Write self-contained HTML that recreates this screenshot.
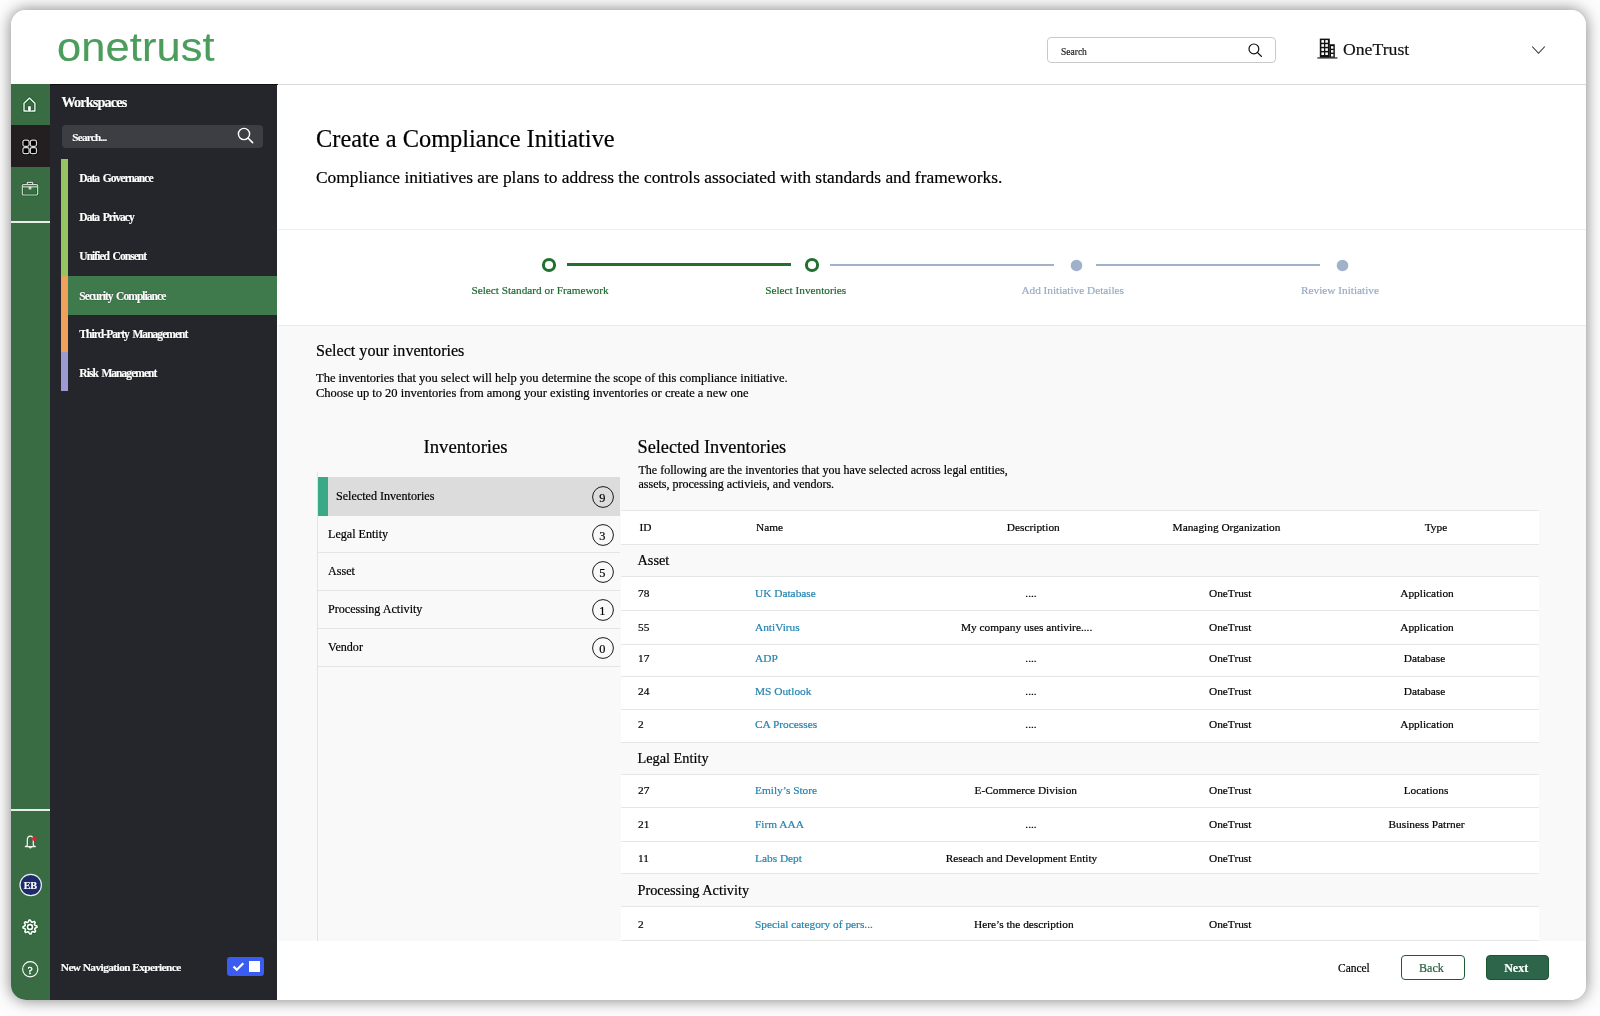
<!DOCTYPE html>
<html><head><meta charset="utf-8">
<style>
*{margin:0;padding:0;box-sizing:border-box;}
html,body{width:1600px;height:1016px;overflow:hidden;background:#fdfdfd;font-family:"Liberation Serif",serif;color:#111;}
.abs{position:absolute;}
svg.abs{overflow:visible;}
.t{position:absolute;white-space:nowrap;line-height:1;-webkit-text-stroke-width:0.2px;}
#card{will-change:transform;position:absolute;left:11px;top:10px;width:1575px;height:990px;border-radius:15px;background:#fff;overflow:hidden;box-shadow:0 0 16px rgba(0,0,0,0.5);}
#hdr{position:absolute;left:0;top:0;width:1575px;height:74.6px;background:#fff;border-bottom:1px solid #d9d9d9;}
#rail{position:absolute;left:0;top:73.5px;width:38.5px;height:917px;background:#3a6c44;}
#side{position:absolute;left:38.5px;top:73.5px;width:228.7px;height:917px;background:#25262b;border-top:1px solid #111;border-right:1px solid #111;}
#main{position:absolute;left:266px;top:74.6px;width:1309px;height:916px;background:#fff;}
</style></head><body>
<div id="card">
  <div id="hdr"></div>
  <div id="rail"></div>
  <div id="side"></div>
  <div id="main"></div>
<div class="t" style="left:45.80px;top:17.44px;font-size:40px;color:#4a9d5b;font-family:'Liberation Sans',sans-serif;letter-spacing:0.1px;transform:scaleX(1.085);transform-origin:0 0;-webkit-text-stroke:0.15px #4a9d5b;">onetrust</div>
<div class="abs" style="left:1036.00px;top:27.00px;width:229.00px;height:25.50px;border:1px solid #c9c9c9;border-radius:4px;background:#fff;"></div>
<div class="t" style="left:1050.00px;top:38.04px;font-size:9.5px;color:#222;">Search</div>
<svg class="abs" style="left:1237.00px;top:33.00px;" width="15.00" height="14.50" viewBox="0 0 15 14.5"><circle cx="5.9" cy="5.9" r="4.9" fill="none" stroke="#111" stroke-width="1.2"/><line x1="9.4" y1="9.4" x2="13.4" y2="13.4" stroke="#111" stroke-width="1.3" stroke-linecap="round"/></svg>
<svg class="abs" style="left:1306.00px;top:27.50px;" width="21.00" height="21.50" viewBox="0 0 21 21.5"><rect x="2.8" y="0.6" width="10" height="19" fill="#111"/><rect x="12.8" y="6.2" width="5" height="13.4" fill="#111"/><rect x="0.3" y="19.4" width="20.2" height="1.1" fill="#111"/><rect x="4.4" y="2.1" width="2.6" height="2.6" fill="#fff"/><rect x="8.3" y="2.1" width="2.6" height="2.6" fill="#fff"/><rect x="4.4" y="6.199999999999999" width="2.6" height="2.6" fill="#fff"/><rect x="8.3" y="6.199999999999999" width="2.6" height="2.6" fill="#fff"/><rect x="4.4" y="10.299999999999999" width="2.6" height="2.6" fill="#fff"/><rect x="8.3" y="10.299999999999999" width="2.6" height="2.6" fill="#fff"/><rect x="4.4" y="14.399999999999999" width="2.6" height="2.6" fill="#fff"/><rect x="8.3" y="14.399999999999999" width="2.6" height="2.6" fill="#fff"/><rect x="14" y="8.2" width="2.4" height="2.5" fill="#fff"/><rect x="14" y="12.1" width="2.4" height="2.5" fill="#fff"/><rect x="14" y="16.0" width="2.4" height="2.5" fill="#fff"/></svg>
<div class="t" style="left:1332.00px;top:31.08px;font-size:17.7px;color:#111;">OneTrust</div>
<svg class="abs" style="left:1520.00px;top:35.00px;" width="15.00" height="11.00" viewBox="0 0 15 11"><polyline points="1.2,1.5 7.5,8.3 13.8,1.5" fill="none" stroke="#333" stroke-width="1.1"/></svg>
<div class="abs" style="left:0.00px;top:115.00px;width:38.50px;height:42.00px;background:#231f20;"></div>
<div class="abs" style="left:0.00px;top:211.00px;width:38.50px;height:1.50px;background:#e8efe9;"></div>
<div class="abs" style="left:0.00px;top:799.30px;width:38.50px;height:1.50px;background:#e8efe9;"></div>
<svg class="abs" style="left:11.00px;top:86.00px;" width="16.00" height="18.00" viewBox="0 0 16 18"><path d="M2.0 7.3 L7.45 1.9 L12.9 7.3 L12.9 15.0 L2.0 15.0 Z" fill="none" stroke="#0b5a1e" stroke-width="3.1" stroke-linejoin="round" opacity="0.85"/><path d="M2.0 7.3 L7.45 1.9 L12.9 7.3 L12.9 15.0 L2.0 15.0 Z" fill="none" stroke="#f4f4f4" stroke-width="1.4" stroke-linejoin="round"/><rect x="5.6" y="9.6" width="3.7" height="5.4" fill="#0b5a1e"/><rect x="6.1" y="10.2" width="2.7" height="4.8" fill="#fff"/></svg>
<svg class="abs" style="left:9.00px;top:127.00px;" width="20.00" height="20.00" viewBox="0 0 20 20"><rect x="2.9" y="3.2" width="6.2" height="6.2" rx="1.8" fill="#000" stroke="#000" stroke-width="2.6"/><rect x="10.3" y="3.2" width="6.2" height="6.2" rx="1.8" fill="#000" stroke="#000" stroke-width="2.6"/><rect x="2.9" y="10.5" width="6.2" height="6.2" rx="1.8" fill="#000" stroke="#000" stroke-width="2.6"/><rect x="10.3" y="10.5" width="6.2" height="6.2" rx="1.8" fill="#000" stroke="#000" stroke-width="2.6"/><rect x="2.9" y="3.2" width="6.2" height="6.2" rx="1.8" fill="none" stroke="#d8d8d8" stroke-width="1.25"/><rect x="10.3" y="3.2" width="6.2" height="6.2" rx="1.8" fill="none" stroke="#d8d8d8" stroke-width="1.25"/><rect x="2.9" y="10.5" width="6.2" height="6.2" rx="1.8" fill="none" stroke="#d8d8d8" stroke-width="1.25"/><rect x="10.3" y="10.5" width="6.2" height="6.2" rx="1.8" fill="none" stroke="#d8d8d8" stroke-width="1.25"/></svg>
<svg class="abs" style="left:10.00px;top:170.50px;" width="18.00" height="15.50" viewBox="0 0 18 15.5"><g opacity="0.8"><rect x="1.3" y="3.6" width="15.4" height="10.4" rx="1.2" fill="none" stroke="#075c1c" stroke-width="2.6"/><path d="M6.3 3.6 V1.7 Q6.3 1.3 6.8 1.3 H11.2 Q11.7 1.3 11.7 1.7 V3.6" fill="none" stroke="#075c1c" stroke-width="2.6"/><line x1="1.3" y1="5.9" x2="16.7" y2="5.9" stroke="#075c1c" stroke-width="2.6"/><rect x="7.6" y="5.6" width="2.8" height="3.0" rx="0.6" fill="#075c1c"/></g><rect x="1.3" y="3.6" width="15.4" height="10.4" rx="1.2" fill="none" stroke="#d2ddd2" stroke-width="1.2"/><path d="M6.3 3.6 V1.7 Q6.3 1.3 6.8 1.3 H11.2 Q11.7 1.3 11.7 1.7 V3.6" fill="none" stroke="#d2ddd2" stroke-width="1.2"/><line x1="1.3" y1="5.9" x2="16.7" y2="5.9" stroke="#d2ddd2" stroke-width="1.2"/><rect x="7.6" y="5.6" width="2.8" height="3.0" rx="0.6" fill="#d2ddd2"/></svg>
<svg class="abs" style="left:12.00px;top:823.20px;" width="16.00" height="17.00" viewBox="0 0 16 17.0"><path d="M4.3 12.2 V7.4 Q4.3 3.2 7.3 3.2 Q10.3 3.2 10.3 7.4 V12.2 Q10.6 13.1 12.3 13.6 H2.3 Q4.0 13.1 4.3 12.2 Z" fill="none" stroke="#f2f2f2" stroke-width="1.25" stroke-linejoin="round"/><path d="M6.0 14.2 Q7.3 15.6 8.6 14.2" fill="none" stroke="#f2f2f2" stroke-width="1.2"/><circle cx="11.3" cy="5.7" r="2.3" fill="#e0203a"/></svg>
<svg class="abs" style="left:6.50px;top:861.60px;" width="26.00" height="26.00" viewBox="0 0 26.0 26.0"><circle cx="12.7" cy="13" r="10.7" fill="#1c2c6b" stroke="#e9eef0" stroke-width="1.2"/></svg>
<div class="t" style="left:-0.80px;top:871.06px;width:40px;text-align:center;font-size:10.2px;color:#fff;font-weight:bold;letter-spacing:-0.3px;">EB</div>
<svg class="abs" style="left:10.00px;top:908.00px;" width="18.00" height="18.00" viewBox="0 0 18 18"><g transform="translate(9,9)"><polygon points="6.92,-1.03 6.99,0.34 5.04,1.26 4.70,2.22 5.62,4.17 4.70,5.19 2.67,4.46 1.75,4.90 1.03,6.92 -0.34,6.99 -1.26,5.04 -2.22,4.70 -4.17,5.62 -5.19,4.70 -4.46,2.67 -4.90,1.75 -6.92,1.03 -6.99,-0.34 -5.04,-1.26 -4.70,-2.22 -5.62,-4.17 -4.70,-5.19 -2.67,-4.46 -1.75,-4.90 -1.03,-6.92 0.34,-6.99 1.26,-5.04 2.22,-4.70 4.17,-5.62 5.19,-4.70 4.46,-2.67 4.90,-1.75" fill="none" stroke="#075c1c" stroke-width="2.9" stroke-linejoin="round" opacity="0.6"/><polygon points="6.92,-1.03 6.99,0.34 5.04,1.26 4.70,2.22 5.62,4.17 4.70,5.19 2.67,4.46 1.75,4.90 1.03,6.92 -0.34,6.99 -1.26,5.04 -2.22,4.70 -4.17,5.62 -5.19,4.70 -4.46,2.67 -4.90,1.75 -6.92,1.03 -6.99,-0.34 -5.04,-1.26 -4.70,-2.22 -5.62,-4.17 -4.70,-5.19 -2.67,-4.46 -1.75,-4.90 -1.03,-6.92 0.34,-6.99 1.26,-5.04 2.22,-4.70 4.17,-5.62 5.19,-4.70 4.46,-2.67 4.90,-1.75" fill="none" stroke="#fff" stroke-width="1.6" stroke-linejoin="round"/><circle r="2.4" fill="#063d12" stroke="#fff" stroke-width="1.6"/></g></svg>
<svg class="abs" style="left:11.00px;top:951.00px;" width="16.50" height="16.50" viewBox="0 0 16.5 16.5"><circle cx="8.25" cy="8.25" r="7.6" fill="none" stroke="#fff" stroke-width="1.1"/></svg>
<div class="t" style="left:9.30px;top:955.19px;width:20px;text-align:center;font-size:11px;color:#fff;-webkit-text-stroke-width:0.5px;">?</div>
<div class="t" style="left:50.50px;top:84.52px;font-size:14.3px;color:#fff;font-weight:bold;letter-spacing:-0.9px;text-shadow:0 0 1px #000;">Workspaces</div>
<div class="abs" style="left:51.00px;top:115.00px;width:201.00px;height:23.00px;background:#3c3e43;border-radius:4px;"></div>
<div class="t" style="left:61.30px;top:121.82px;font-size:11.2px;color:#fff;font-weight:bold;letter-spacing:-0.75px;text-shadow:0 0 1px #000;">Search...</div>
<svg class="abs" style="left:225.50px;top:117.00px;" width="17.50" height="17.00" viewBox="0 0 17.5 17"><circle cx="7" cy="7" r="5.6" fill="none" stroke="#fff" stroke-width="1.4"/><line x1="11" y1="11" x2="15.6" y2="15.6" stroke="#fff" stroke-width="1.6" stroke-linecap="round"/></svg>
<div class="abs" style="left:57.00px;top:266.20px;width:209.00px;height:38.40px;background:#3e7a4b;"></div>
<div class="abs" style="left:50.20px;top:149.00px;width:6.80px;height:117.20px;background:#97c463;"></div>
<div class="abs" style="left:50.20px;top:266.20px;width:6.80px;height:75.80px;background:#f0a05a;"></div>
<div class="abs" style="left:50.20px;top:342.00px;width:6.80px;height:38.80px;background:#9d99d3;"></div>
<div class="t" style="left:68.30px;top:163.27px;font-size:11.5px;color:#fff;font-weight:bold;letter-spacing:-0.95px;word-spacing:1.6px;text-shadow:0 0 1px #000;">Data Governance</div>
<div class="t" style="left:68.30px;top:201.87px;font-size:11.5px;color:#fff;font-weight:bold;letter-spacing:-0.95px;word-spacing:1.6px;text-shadow:0 0 1px #000;">Data Privacy</div>
<div class="t" style="left:68.30px;top:240.87px;font-size:11.5px;color:#fff;font-weight:bold;letter-spacing:-0.95px;word-spacing:1.6px;text-shadow:0 0 1px #000;">Unified Consent</div>
<div class="t" style="left:68.30px;top:280.57px;font-size:11.5px;color:#fff;font-weight:bold;letter-spacing:-0.95px;word-spacing:1.6px;text-shadow:0 0 1px #000;">Security Compliance</div>
<div class="t" style="left:68.30px;top:319.37px;font-size:11.5px;color:#fff;font-weight:bold;letter-spacing:-0.95px;word-spacing:1.6px;text-shadow:0 0 1px #000;">Third-Party Management</div>
<div class="t" style="left:68.30px;top:357.77px;font-size:11.5px;color:#fff;font-weight:bold;letter-spacing:-0.95px;word-spacing:1.6px;text-shadow:0 0 1px #000;">Risk Management</div>
<div class="t" style="left:49.80px;top:952.44px;font-size:11.3px;color:#fff;font-weight:bold;letter-spacing:-0.55px;text-shadow:0 0 1px #000;">New Navigation Experience</div>
<div class="abs" style="left:216.00px;top:947.00px;width:37.00px;height:19.00px;background:#3b5cf0;border-radius:3px;"></div>
<svg class="abs" style="left:220.00px;top:950.00px;" width="15.00" height="13.00" viewBox="0 0 15 13"><polyline points="2.5,6.5 5.8,9.8 12.3,3.2" fill="none" stroke="#fff" stroke-width="2.2"/></svg>
<div class="abs" style="left:238.00px;top:951.30px;width:11.20px;height:10.50px;background:#fff;"></div>
<div class="abs" style="left:267.00px;top:219.00px;width:1308.00px;height:1.00px;background:#eeeeee;"></div>
<div class="abs" style="left:267.00px;top:315.00px;width:1308.00px;height:616.00px;background:#f9f9f9;border-top:1px solid #eaeaea;"></div>
<div class="t" style="left:305.00px;top:116.97px;font-size:24.4px;color:#000;">Create a Compliance Initiative</div>
<div class="t" style="left:305.00px;top:159.43px;font-size:17.4px;color:#000;">Compliance initiatives are plans to address the controls associated with standards and frameworks.</div>
<svg class="abs" style="left:530.00px;top:247.00px;" width="16.00" height="16.00" viewBox="0 0 16 16"><circle cx="8" cy="8" r="5.6" fill="none" stroke="#22702f" stroke-width="3"/></svg>
<div class="abs" style="left:555.50px;top:253.20px;width:224.00px;height:3.00px;background:#22702f;"></div>
<svg class="abs" style="left:792.50px;top:247.00px;" width="16.00" height="16.00" viewBox="0 0 16.0 16"><circle cx="8" cy="8" r="5.6" fill="none" stroke="#22702f" stroke-width="3"/></svg>
<div class="abs" style="left:819.00px;top:253.70px;width:224.00px;height:2.00px;background:#9fb2ca;"></div>
<svg class="abs" style="left:1059.00px;top:248.50px;" width="13.00" height="13.00" viewBox="0 0 13 13.0"><circle cx="6.5" cy="6.5" r="5.8" fill="#9fb2ca"/></svg>
<div class="abs" style="left:1085.00px;top:253.70px;width:224.00px;height:2.00px;background:#9fb2ca;"></div>
<svg class="abs" style="left:1324.50px;top:248.50px;" width="13.00" height="13.00" viewBox="0 0 13.0 13.0"><circle cx="6.5" cy="6.5" r="5.8" fill="#9fb2ca"/></svg>
<div class="t" style="left:229.00px;top:275.37px;width:600px;text-align:center;font-size:11.26px;color:#1d6a30;">Select Standard or Framework</div>
<div class="t" style="left:494.70px;top:275.37px;width:600px;text-align:center;font-size:11.26px;color:#1d6a30;">Select Inventories</div>
<div class="t" style="left:761.70px;top:275.37px;width:600px;text-align:center;font-size:11.26px;color:#98abc4;">Add Initiative Detailes</div>
<div class="t" style="left:1029.00px;top:275.37px;width:600px;text-align:center;font-size:11.26px;color:#98abc4;">Review Initiative</div>
<div class="t" style="left:305.00px;top:333.32px;font-size:16.1px;color:#000;">Select your inventories</div>
<div class="t" style="left:305.00px;top:361.53px;font-size:12.5px;color:#000;">The inventories that you select will help you determine the scope of this compliance initiative.</div>
<div class="t" style="left:305.00px;top:376.93px;font-size:12.5px;color:#000;">Choose up to 20 inventories from among your existing inventories or create a new one</div>
<div class="t" style="left:154.60px;top:428.34px;width:600px;text-align:center;font-size:18.7px;color:#000;">Inventories</div>
<div class="abs" style="left:306.00px;top:462.00px;width:1.00px;height:469.00px;background:#e3e3e3;"></div>
<div class="abs" style="left:307.00px;top:467.30px;width:302.30px;height:38.90px;background:#dcdcdc;"></div>
<div class="abs" style="left:307.00px;top:467.30px;width:10.00px;height:38.90px;background:#3aa987;"></div>
<div class="t" style="left:325.00px;top:479.67px;font-size:12.1px;color:#000;">Selected Inventories</div>
<div class="abs" style="left:307.00px;top:542.00px;width:302.30px;height:1.00px;background:#e4e4e4;"></div>
<div class="abs" style="left:307.00px;top:580.00px;width:302.30px;height:1.00px;background:#e4e4e4;"></div>
<div class="abs" style="left:307.00px;top:618.00px;width:302.30px;height:1.00px;background:#e4e4e4;"></div>
<div class="abs" style="left:307.00px;top:656.00px;width:302.30px;height:1.00px;background:#e4e4e4;"></div>
<svg class="abs" style="left:581.00px;top:475.90px;" width="22.00" height="22.00" viewBox="0 0 22 22.0"><circle cx="11" cy="11" r="10.4" fill="none" stroke="#1a1a1a" stroke-width="1"/></svg>
<div class="t" style="left:576.40px;top:481.90px;width:30px;text-align:center;font-size:12.3px;color:#000;">9</div>
<svg class="abs" style="left:581.00px;top:513.60px;" width="22.00" height="22.00" viewBox="0 0 22 22.0"><circle cx="11" cy="11" r="10.4" fill="none" stroke="#1a1a1a" stroke-width="1"/></svg>
<div class="t" style="left:576.40px;top:519.60px;width:30px;text-align:center;font-size:12.3px;color:#000;">3</div>
<svg class="abs" style="left:581.00px;top:551.10px;" width="22.00" height="22.00" viewBox="0 0 22 22.0"><circle cx="11" cy="11" r="10.4" fill="none" stroke="#1a1a1a" stroke-width="1"/></svg>
<div class="t" style="left:576.40px;top:557.10px;width:30px;text-align:center;font-size:12.3px;color:#000;">5</div>
<svg class="abs" style="left:581.00px;top:589.30px;" width="22.00" height="22.00" viewBox="0 0 22 22.0"><circle cx="11" cy="11" r="10.4" fill="none" stroke="#1a1a1a" stroke-width="1"/></svg>
<div class="t" style="left:576.40px;top:595.30px;width:30px;text-align:center;font-size:12.3px;color:#000;">1</div>
<svg class="abs" style="left:581.00px;top:627.20px;" width="22.00" height="22.00" viewBox="0 0 22 22.0"><circle cx="11" cy="11" r="10.4" fill="none" stroke="#1a1a1a" stroke-width="1"/></svg>
<div class="t" style="left:576.40px;top:633.20px;width:30px;text-align:center;font-size:12.3px;color:#000;">0</div>
<div class="t" style="left:317.00px;top:517.87px;font-size:12.1px;color:#000;">Legal Entity</div>
<div class="t" style="left:317.00px;top:554.77px;font-size:12.1px;color:#000;">Asset</div>
<div class="t" style="left:317.00px;top:593.17px;font-size:12.1px;color:#000;">Processing Activity</div>
<div class="t" style="left:317.00px;top:630.67px;font-size:12.1px;color:#000;">Vendor</div>
<div class="t" style="left:626.50px;top:428.17px;font-size:18.3px;color:#000;">Selected Inventories</div>
<div class="t" style="left:627.50px;top:453.75px;font-size:12px;color:#000;">The following are the inventories that you have selected across legal entities,</div>
<div class="t" style="left:627.50px;top:468.25px;font-size:12px;color:#000;">assets, processing activieis, and vendors.</div>
<div class="abs" style="left:610.00px;top:501.00px;width:918.00px;height:33.00px;background:#fff;"></div>
<div class="abs" style="left:610.00px;top:535.00px;width:918.00px;height:31.00px;background:#f9f9f9;"></div>
<div class="abs" style="left:610.00px;top:567.00px;width:918.00px;height:33.00px;background:#fff;"></div>
<div class="abs" style="left:610.00px;top:601.00px;width:918.00px;height:33.00px;background:#fff;"></div>
<div class="abs" style="left:610.00px;top:635.00px;width:918.00px;height:31.00px;background:#fff;"></div>
<div class="abs" style="left:610.00px;top:667.00px;width:918.00px;height:32.00px;background:#fff;"></div>
<div class="abs" style="left:610.00px;top:700.00px;width:918.00px;height:32.00px;background:#fff;"></div>
<div class="abs" style="left:610.00px;top:733.00px;width:918.00px;height:31.00px;background:#f9f9f9;"></div>
<div class="abs" style="left:610.00px;top:765.00px;width:918.00px;height:32.00px;background:#fff;"></div>
<div class="abs" style="left:610.00px;top:798.00px;width:918.00px;height:33.00px;background:#fff;"></div>
<div class="abs" style="left:610.00px;top:832.00px;width:918.00px;height:31.00px;background:#fff;"></div>
<div class="abs" style="left:610.00px;top:864.00px;width:918.00px;height:32.00px;background:#f9f9f9;"></div>
<div class="abs" style="left:610.00px;top:897.00px;width:918.00px;height:33.00px;background:#fff;"></div>
<div class="abs" style="left:610.00px;top:500.00px;width:918.00px;height:1.00px;background:#e6e6e6;"></div>
<div class="abs" style="left:610.00px;top:534.00px;width:918.00px;height:1.00px;background:#e6e6e6;"></div>
<div class="abs" style="left:610.00px;top:566.00px;width:918.00px;height:1.00px;background:#e6e6e6;"></div>
<div class="abs" style="left:610.00px;top:600.00px;width:918.00px;height:1.00px;background:#e6e6e6;"></div>
<div class="abs" style="left:610.00px;top:634.00px;width:918.00px;height:1.00px;background:#e6e6e6;"></div>
<div class="abs" style="left:610.00px;top:666.00px;width:918.00px;height:1.00px;background:#e6e6e6;"></div>
<div class="abs" style="left:610.00px;top:699.00px;width:918.00px;height:1.00px;background:#e6e6e6;"></div>
<div class="abs" style="left:610.00px;top:732.00px;width:918.00px;height:1.00px;background:#e6e6e6;"></div>
<div class="abs" style="left:610.00px;top:764.00px;width:918.00px;height:1.00px;background:#e6e6e6;"></div>
<div class="abs" style="left:610.00px;top:797.00px;width:918.00px;height:1.00px;background:#e6e6e6;"></div>
<div class="abs" style="left:610.00px;top:831.00px;width:918.00px;height:1.00px;background:#e6e6e6;"></div>
<div class="abs" style="left:610.00px;top:863.00px;width:918.00px;height:1.00px;background:#e6e6e6;"></div>
<div class="abs" style="left:610.00px;top:896.00px;width:918.00px;height:1.00px;background:#e6e6e6;"></div>
<div class="abs" style="left:610.00px;top:930.00px;width:918.00px;height:1.00px;background:#e6e6e6;"></div>
<div class="t" style="left:628.50px;top:512.29px;font-size:11.35px;color:#000;">ID</div>
<div class="t" style="left:745.00px;top:512.29px;font-size:11.35px;color:#000;">Name</div>
<div class="t" style="left:722.30px;top:512.29px;width:600px;text-align:center;font-size:11.35px;color:#000;">Description</div>
<div class="t" style="left:915.50px;top:512.29px;width:600px;text-align:center;font-size:11.35px;color:#000;">Managing Organization</div>
<div class="t" style="left:1125.00px;top:512.29px;width:600px;text-align:center;font-size:11.35px;color:#000;">Type</div>
<div class="t" style="left:626.50px;top:543.02px;font-size:14.3px;color:#000;">Asset</div>
<div class="t" style="left:626.50px;top:740.72px;font-size:14.3px;color:#000;">Legal Entity</div>
<div class="t" style="left:626.50px;top:873.12px;font-size:14.3px;color:#000;">Processing Activity</div>
<div class="t" style="left:627.00px;top:577.69px;font-size:11.35px;color:#000;">78</div>
<div class="t" style="left:744.00px;top:577.69px;font-size:11.35px;color:#2284b2;">UK Database</div>
<div class="t" style="left:720.00px;top:577.69px;width:600px;text-align:center;font-size:11.35px;color:#000;">....</div>
<div class="t" style="left:919.20px;top:577.69px;width:600px;text-align:center;font-size:11.35px;color:#000;">OneTrust</div>
<div class="t" style="left:1116.00px;top:577.69px;width:600px;text-align:center;font-size:11.35px;color:#000;">Application</div>
<div class="t" style="left:627.00px;top:611.99px;font-size:11.35px;color:#000;">55</div>
<div class="t" style="left:744.00px;top:611.99px;font-size:11.35px;color:#2284b2;">AntiVirus</div>
<div class="t" style="left:715.60px;top:611.99px;width:600px;text-align:center;font-size:11.35px;color:#000;">My company uses antivire....</div>
<div class="t" style="left:919.20px;top:611.99px;width:600px;text-align:center;font-size:11.35px;color:#000;">OneTrust</div>
<div class="t" style="left:1116.00px;top:611.99px;width:600px;text-align:center;font-size:11.35px;color:#000;">Application</div>
<div class="t" style="left:627.00px;top:643.49px;font-size:11.35px;color:#000;">17</div>
<div class="t" style="left:744.00px;top:643.49px;font-size:11.35px;color:#2284b2;">ADP</div>
<div class="t" style="left:720.00px;top:643.49px;width:600px;text-align:center;font-size:11.35px;color:#000;">....</div>
<div class="t" style="left:919.20px;top:643.49px;width:600px;text-align:center;font-size:11.35px;color:#000;">OneTrust</div>
<div class="t" style="left:1113.50px;top:643.49px;width:600px;text-align:center;font-size:11.35px;color:#000;">Database</div>
<div class="t" style="left:627.00px;top:676.29px;font-size:11.35px;color:#000;">24</div>
<div class="t" style="left:744.00px;top:676.29px;font-size:11.35px;color:#2284b2;">MS Outlook</div>
<div class="t" style="left:720.00px;top:676.29px;width:600px;text-align:center;font-size:11.35px;color:#000;">....</div>
<div class="t" style="left:919.20px;top:676.29px;width:600px;text-align:center;font-size:11.35px;color:#000;">OneTrust</div>
<div class="t" style="left:1113.50px;top:676.29px;width:600px;text-align:center;font-size:11.35px;color:#000;">Database</div>
<div class="t" style="left:627.00px;top:708.69px;font-size:11.35px;color:#000;">2</div>
<div class="t" style="left:744.00px;top:708.69px;font-size:11.35px;color:#2284b2;">CA Processes</div>
<div class="t" style="left:720.00px;top:708.69px;width:600px;text-align:center;font-size:11.35px;color:#000;">....</div>
<div class="t" style="left:919.20px;top:708.69px;width:600px;text-align:center;font-size:11.35px;color:#000;">OneTrust</div>
<div class="t" style="left:1116.00px;top:708.69px;width:600px;text-align:center;font-size:11.35px;color:#000;">Application</div>
<div class="t" style="left:627.00px;top:775.49px;font-size:11.35px;color:#000;">27</div>
<div class="t" style="left:744.00px;top:775.49px;font-size:11.35px;color:#2284b2;">Emily&#8217;s Store</div>
<div class="t" style="left:714.80px;top:775.49px;width:600px;text-align:center;font-size:11.35px;color:#000;">E-Commerce Division</div>
<div class="t" style="left:919.20px;top:775.49px;width:600px;text-align:center;font-size:11.35px;color:#000;">OneTrust</div>
<div class="t" style="left:1115.00px;top:775.49px;width:600px;text-align:center;font-size:11.35px;color:#000;">Locations</div>
<div class="t" style="left:627.00px;top:809.49px;font-size:11.35px;color:#000;">21</div>
<div class="t" style="left:744.00px;top:809.49px;font-size:11.35px;color:#2284b2;">Firm AAA</div>
<div class="t" style="left:720.00px;top:809.49px;width:600px;text-align:center;font-size:11.35px;color:#000;">....</div>
<div class="t" style="left:919.20px;top:809.49px;width:600px;text-align:center;font-size:11.35px;color:#000;">OneTrust</div>
<div class="t" style="left:1115.50px;top:809.49px;width:600px;text-align:center;font-size:11.35px;color:#000;">Business Patrner</div>
<div class="t" style="left:627.00px;top:842.69px;font-size:11.35px;color:#000;">11</div>
<div class="t" style="left:744.00px;top:842.69px;font-size:11.35px;color:#2284b2;">Labs Dept</div>
<div class="t" style="left:710.50px;top:842.69px;width:600px;text-align:center;font-size:11.35px;color:#000;">Reseach and Development Entity</div>
<div class="t" style="left:919.20px;top:842.69px;width:600px;text-align:center;font-size:11.35px;color:#000;">OneTrust</div>
<div class="t" style="left:627.00px;top:909.09px;font-size:11.35px;color:#000;">2</div>
<div class="t" style="left:744.00px;top:909.09px;font-size:11.35px;color:#2284b2;">Special category of pers...</div>
<div class="t" style="left:712.80px;top:909.09px;width:600px;text-align:center;font-size:11.35px;color:#000;">Here&#8217;s the description</div>
<div class="t" style="left:919.20px;top:909.09px;width:600px;text-align:center;font-size:11.35px;color:#000;">OneTrust</div>
<div class="t" style="left:1327.00px;top:953.11px;font-size:11.45px;color:#000;">Cancel</div>
<div class="abs" style="left:1390.30px;top:944.80px;width:63.40px;height:25.70px;border:1.8px solid #1f5c32;border-radius:4px;background:#fff;"></div>
<div class="t" style="left:1390.40px;top:952.32px;width:60px;text-align:center;font-size:12.04px;color:#24603a;">Back</div>
<div class="abs" style="left:1474.80px;top:944.80px;width:63.40px;height:25.70px;border:1.4px solid #1d5530;border-radius:4px;background:#2c6549;"></div>
<div class="t" style="left:1475.20px;top:952.35px;width:60px;text-align:center;font-size:12.0px;color:#fff;font-weight:bold;">Next</div>
</div>
</body></html>
